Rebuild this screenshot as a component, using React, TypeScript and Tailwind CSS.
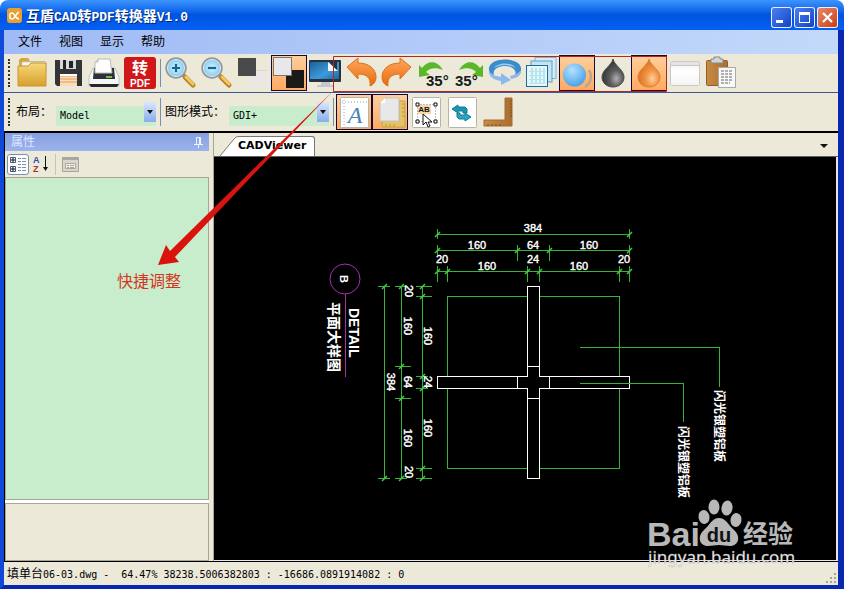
import React from "react";

type IconButton = { label: string; active?: boolean; icon: React.ReactNode };

const SANS = "font-['Liberation_Sans','Noto_Sans_CJK_SC',sans-serif]";
const MONO = "font-['DejaVu_Sans_Mono','Noto_Sans_CJK_SC',monospace]";
const NARROW = "Liberation Sans Narrow, Liberation Sans, sans-serif";

function Defs() {
  return (
    <svg className="absolute size-0" aria-hidden="true">
      <defs>
        <linearGradient id="gold" x1="0" y1="0" x2="0" y2="1">
          <stop offset="0" stopColor="#f8d878" />
          <stop offset="1" stopColor="#d6a02c" />
        </linearGradient>
        <linearGradient id="orange" x1="0" y1="0" x2="0" y2="1">
          <stop offset="0" stopColor="#ffa860" />
          <stop offset="1" stopColor="#e86a08" />
        </linearGradient>
        <linearGradient id="screen" x1="0" y1="0" x2="1" y2="1">
          <stop offset="0" stopColor="#1c5f9e" />
          <stop offset="0.6" stopColor="#3d9bd8" />
          <stop offset="1" stopColor="#1b66a5" />
        </linearGradient>
        <linearGradient id="paper" x1="0" y1="0" x2="0" y2="1">
          <stop offset="0" stopColor="#f0f0f0" />
          <stop offset="0.4" stopColor="#ffffff" />
          <stop offset="1" stopColor="#f4f4f4" />
        </linearGradient>
        <linearGradient id="wood" x1="0" y1="0" x2="1" y2="0">
          <stop offset="0" stopColor="#c98b45" />
          <stop offset="1" stopColor="#a86f30" />
        </linearGradient>
        <radialGradient id="ball" cx="0.4" cy="0.3" r="0.7">
          <stop offset="0" stopColor="#b4e2ff" />
          <stop offset="1" stopColor="#4aa4ea" />
        </radialGradient>
        <radialGradient id="lens" cx="0.5" cy="0.5" r="0.5">
          <stop offset="0" stopColor="#d8f4ff" />
          <stop offset="1" stopColor="#7cc8f0" />
        </radialGradient>
        <radialGradient id="dropDark" cx="0.65" cy="0.7" r="0.6">
          <stop offset="0" stopColor="#b0b0b0" />
          <stop offset="0.5" stopColor="#5c5c5c" />
          <stop offset="1" stopColor="#3a3a3a" />
        </radialGradient>
        <radialGradient id="dropOrange" cx="0.65" cy="0.7" r="0.6">
          <stop offset="0" stopColor="#ffd09c" />
          <stop offset="0.5" stopColor="#f09444" />
          <stop offset="1" stopColor="#dc7828" />
        </radialGradient>
      </defs>
    </svg>
  );
}

function Icon({ children }: { children: React.ReactNode }) {
  return (
    <svg viewBox="0 0 36 36" className="size-9" aria-hidden="true">
      {children}
    </svg>
  );
}

function Magnifier({ plus }: { plus?: boolean }) {
  return (
    <Icon>
      <path d="M19 19l3 3" stroke="#888" strokeWidth="3" />
      <path d="M22 22l8 8" stroke="#b98220" strokeWidth="5" strokeLinecap="round" />
      <path d="M23 22l7 7" stroke="#f4c860" strokeWidth="3" strokeLinecap="round" />
      <circle cx="13" cy="13" r="9.500" fill="url(#lens)" stroke="#8e9aa4" strokeWidth="2.500" />
      <circle cx="13" cy="13" r="8.500" fill="none" stroke="#e8eef2" strokeWidth="1" />
      <path d={plus ? "M9 13h8M13 9v8" : "M9 13h8"} stroke="#17648f" strokeWidth="2.200" />
    </Icon>
  );
}

const undoPath = "M4 12L15 3v5c11 0 18 6 18 14 0 5-3 8-6 9 1-8-3-12-12-12v5z";

function Drop({ fill, edge }: { fill: string; edge: string }) {
  return (
    <Icon>
      <path d="M18 4c1 6 11 11 11 18 0 6-5 10-11 10S7 28 7 22C7 15 17 10 18 4z" fill={fill} stroke={edge} />
    </Icon>
  );
}

function Sheet({ children }: { children: React.ReactNode }) {
  return (
    <Icon>
      <rect x="4.500" y="3.500" width="28" height="30" rx="1" fill="#fff" stroke="#b8b4a8" />
      {children}
    </Icon>
  );
}

const fileTools: IconButton[] = [
  {
    label: "打开",
    icon: (
      <Icon>
        <path d="M5 5l2-2h7l2 3h15v12H5z" fill="#d9a63a" />
        <path d="M8 7h24v10H8z" fill="#fafafa" stroke="#ccc" />
        <path d="M4 11h10l3-3h15v23H4z" fill="url(#gold)" stroke="#c99430" />
      </Icon>
    ),
  },
  {
    label: "保存",
    icon: (
      <Icon>
        <path d="M5 5h27v26H7l-2-2z" fill="#333436" />
        <path d="M10 5h16v9H10z" fill="#d8d8dc" />
        <path d="M13 5h3v9h-3zM19 6h4v7h-4z" fill="#222" />
        <path d="M10 19h17v12H10z" fill="#fbdcb8" />
        <path d="M10 21h17M10 24h17M10 27h17" stroke="#e49a5c" />
        <path d="M10 19h17v2H10z" fill="#fff" />
      </Icon>
    ),
  },
  {
    label: "打印",
    icon: (
      <Icon>
        <path d="M7 13h22l4 9v9H3v-9z" fill="#f4f6f8" stroke="#c0c2c4" />
        <path d="M8 13h20l1 11H7z" fill="#2e3234" />
        <path d="M9 18V7l3-3h12l2 14z" fill="#fdfdfd" stroke="#bbb" />
        <path d="M9 7h3V4" fill="#ddd" stroke="#bbb" />
        <path d="M3 29h30l-2 3H5z" fill="#26282a" />
        <path d="M20 22h6" stroke="#78b844" strokeWidth="2" />
      </Icon>
    ),
  },
  {
    label: "转PDF",
    icon: (
      <Icon>
        <rect x="2" y="2" width="32" height="32" rx="3" fill="#d01818" />
        <text x="18" y="19" textAnchor="middle" fontSize="16" fontWeight="700" fill="#fff">转</text>
        <text x="18" y="32" textAnchor="middle" fontSize="10" fontWeight="700" fill="#fff">PDF</text>
      </Icon>
    ),
  },
];

const viewTools: IconButton[] = [
  { label: "放大", icon: <Magnifier plus /> },
  { label: "缩小", icon: <Magnifier /> },
  {
    label: "黑色背景",
    icon: (
      <Icon>
        <rect x="15" y="16" width="18" height="16" fill="#e9e8e2" />
        <path d="M21 15.500h11" stroke="#d8d8d4" />
        <rect x="3" y="3" width="18" height="18" fill="#4a4a4a" />
      </Icon>
    ),
  },
  {
    label: "黑白",
    active: true,
    icon: (
      <Icon>
        <rect x="15" y="15" width="18" height="18" fill="#1c1a18" />
        <rect x="2.500" y="2.500" width="18" height="18" fill="#e8e8ea" stroke="#777" />
      </Icon>
    ),
  },
  {
    label: "全屏",
    icon: (
      <Icon>
        <path d="M14 26h9v4h4v2H10v-2h4z" fill="#c4c8cc" />
        <rect x="2" y="5" width="32" height="22" rx="1" fill="#27323e" />
        <rect x="3" y="7" width="29" height="17" fill="url(#screen)" />
        <path d="M21 5l9 12V5z" fill="#27323e" />
        <path d="M21 7l10 9H21z" fill="#f4f6f8" />
      </Icon>
    ),
  },
  { label: "撤销", icon: <Icon><path d={undoPath} fill="url(#orange)" stroke="#d8741c" /></Icon> },
  {
    label: "重做",
    icon: <Icon><path d={undoPath} transform="translate(36 0) scale(-1 1)" fill="url(#orange)" stroke="#d8741c" /></Icon>,
  },
  {
    label: "左转35度",
    icon: (
      <Icon>
        <path d="M4 10v12l11-2-4-3c3-4 10-5 17-2C22 5 13 5 7 13z" fill="#58b828" />
        <text x="11" y="31" fontSize="15" fontWeight="700" fontFamily={NARROW} fill="#15191c">35°</text>
      </Icon>
    ),
  },
  {
    label: "右转35度",
    icon: (
      <Icon>
        <path d="M32 10v12l-11-2 4-3c-3-4-10-5-17-2C14 5 23 5 29 13z" fill="#58b828" />
        <text x="4" y="31" fontSize="15" fontWeight="700" fontFamily={NARROW} fill="#15191c">35°</text>
      </Icon>
    ),
  },
  {
    label: "旋转",
    icon: (
      <Icon>
        <path d="M2 15C0 1 36 1 34 15c0 4-3 6-7 7 5-7-3-11-9-11S5 14 7 20c-3-1-5-2-5-5z" fill="#3c8ccc" />
        <path d="M7 13c4-6 18-6 22 0-6-4-16-4-22 0z" fill="#9cd0f4" />
        <path d="M2 15c1 4 6 6 12 7v-4l10 7-10 5v-4C6 25 1 21 2 15z" fill="#8cb8ee" />
        <path d="M34 15c0 6-4 8-10 9l-1-3c5-1 9-3 11-6z" fill="#8cb8ee" />
      </Icon>
    ),
  },
  {
    label: "图层",
    icon: (
      <Icon>
        <rect x="12" y="2.500" width="21" height="21" fill="#d4ecf6" stroke="#80b4d0" />
        <rect x="8" y="6" width="21" height="21" fill="#c4e4f2" stroke="#60a0c4" />
        <rect x="3.500" y="10.500" width="21" height="21" fill="#e8f6fa" stroke="#1c6c9c" />
        <rect x="6" y="13" width="16" height="16" fill="#b8e4f0" />
        <path d="M7 13v16M11 13v16M15 13v16M19 13v16M6 15h16M6 19h16M6 23h16M6 27h16" stroke="#e4f6fa" strokeWidth="2" strokeDasharray="2 2" />
      </Icon>
    ),
  },
  {
    label: "弧线",
    active: true,
    icon: (
      <Icon>
        <path d="M30 15c4 7 1 14-4 17" fill="none" stroke="#b8a890" strokeWidth="2.500" />
        <circle cx="15.500" cy="20" r="11.500" fill="url(#ball)" />
      </Icon>
    ),
  },
  { label: "灰度", icon: <Drop fill="url(#dropDark)" edge="#4a4a4a" /> },
  { label: "彩色", active: true, icon: <Drop fill="url(#dropOrange)" edge="#e08030" /> },
  {
    label: "窗口",
    icon: (
      <Icon>
        <rect x="3.500" y="6.500" width="29" height="24" rx="1" fill="url(#paper)" stroke="#ccc8c0" />
        <path d="M4 7h28v3H4z" fill="#e4e4e4" />
        <path d="M4 10.500h28" stroke="#c8c8c8" />
      </Icon>
    ),
  },
  {
    label: "粘贴",
    icon: (
      <Icon>
        <rect x="3.500" y="5.500" width="21" height="25" rx="1" fill="url(#wood)" stroke="#8e6028" />
        <path d="M8 8V4h3V2h6v2h3v4z" fill="#d4d4d4" stroke="#888" />
        <rect x="15.500" y="12.500" width="17" height="20" fill="#f8f8f8" stroke="#aaa" />
        <path d="M18 16h12M18 19h12M18 22h12M18 25h12M18 28h9" stroke="#666" strokeDasharray="3 1" />
      </Icon>
    ),
  },
];

const modeTools: IconButton[] = [
  {
    label: "文字",
    active: true,
    icon: (
      <Sheet>
        <path d="M6 8h25M8 6v25" stroke="#98a4b4" strokeDasharray="1 2" />
        <text x="19" y="29" textAnchor="middle" fontSize="24" fontStyle="italic" fontFamily="Liberation Serif, serif" fill="#4c84b4">A</text>
      </Sheet>
    ),
  },
  {
    label: "图纸尺寸",
    active: true,
    icon: (
      <Icon>
        <path d="M27 7h6v26H10v-7h17z" fill="#e2c468" stroke="#c8a040" />
        <path d="M30 10h3M30 14h3M30 18h3M30 22h3M14 30v3M18 30v3M22 30v3" stroke="#c09838" />
        <path d="M8 9l5-5h14v23H8z" fill="#e8e8e8" stroke="#c8c4bc" />
        <path d="M8 9h5V4z" fill="#ffffff" />
      </Icon>
    ),
  },
  {
    label: "选择文字",
    icon: (
      <Sheet>
        <rect x="9.500" y="10.500" width="18" height="17" fill="none" stroke="#777" strokeDasharray="1 2" />
        <rect x="10" y="11" width="13" height="9" fill="#fbd8a8" />
        <path d="M8 9h3v3H8zM26 9h3v3h-3zM8 26h3v3H8zM26 26h3v3h-3z" fill="#fff" stroke="#111" />
        <text x="16" y="18" textAnchor="middle" fontSize="8" fontWeight="700" fill="#111">AB</text>
        <path d="M15 20v11l3-3 2 5 2-1-2-4h4z" fill="#fff" stroke="#111" />
      </Sheet>
    ),
  },
  {
    label: "切换",
    icon: (
      <Sheet>
        <path d="M8 15l6-4v2h7l2 2v4h-4v-2h-5v2z" fill="#1898b4" stroke="#107890" />
        <path d="M27 23l-6 4v-2h-6l-2-2v-4h3v2h5v-2z" fill="#28a8c0" stroke="#107890" />
      </Sheet>
    ),
  },
  {
    label: "测量",
    icon: (
      <Icon>
        <path d="M25 4h7v28H4v-6h21z" fill="url(#wood)" stroke="#a46c2c" />
        <path d="M30 7h2M30 10h2M30 13h2M30 16h2M30 19h2M30 22h2M8 30v2M12 30v2M16 30v2M20 30v2" stroke="#7c5018" />
      </Icon>
    ),
  },
];

function Tools({ items }: { items: IconButton[] }) {
  return (
    <>
      {items.map((t) => (
        <button
          key={t.label}
          type="button"
          title={t.label}
          aria-label={t.label}
          className={
            t.active
              ? "size-9 shrink-0 bg-linear-to-b from-[#fdd09c] to-[#ffa860] outline outline-1 -outline-offset-1 outline-[#180838]"
              : "size-9 shrink-0"
          }
        >
          {t.icon}
        </button>
      ))}
    </>
  );
}

function Grip() {
  return <div className="mx-1 h-7 w-0 shrink-0 border-l-2 border-dotted border-[#303030]" />;
}

function Separator() {
  return <div className="mx-0.5 h-7 w-px shrink-0 bg-[#7090b8]" />;
}

function Combo({ id, label, value }: { id: string; label: string; value: string }) {
  return (
    <div className="flex shrink-0 items-center px-0.5">
      <label htmlFor={id} className="mr-1 text-xs">{label}</label>
      <div className="relative h-5 w-[100px]">
        <select id={id} defaultValue={value} className={`h-5 w-full appearance-none bg-[#c7edcc] pl-1 text-[10px] outline-none ${MONO}`}>
          <option>{value}</option>
        </select>
        <div className="pointer-events-none absolute inset-y-0 right-0 flex w-3 items-center justify-center bg-linear-to-b from-[#dce8fc] to-[#88acec]">
          <svg viewBox="0 0 6 4" className="h-1 w-1.5"><path d="M0 0h6L3 4z" fill="#111" /></svg>
        </div>
      </div>
    </div>
  );
}

function TitleBar() {
  const frame = "flex size-[21px] items-center justify-center rounded-[3px] border border-white/90";
  return (
    <header className="flex h-[30px] shrink-0 items-center rounded-t-lg bg-linear-to-b from-[#3c94ff] via-[#0054e0] to-[#0460f4] pl-[7px] pr-1.5">
      <svg viewBox="0 0 15 15" className="mr-1 size-[15px]" aria-hidden="true">
        <rect width="15" height="15" rx="3" fill="#e8a030" />
        <path d="M12 4C9 5 8 11 5 11c-3 0-3-6 0-6 3 0 3 6 7 6" fill="none" stroke="#fff" strokeWidth="1.500" />
      </svg>
      <h1 className="flex-1 whitespace-nowrap pt-1 font-['Liberation_Mono','Noto_Sans_CJK_SC',monospace] text-sm font-bold text-white [text-shadow:1px_1px_#002878]">
        互盾<span className="text-[13px]">CAD</span>转<span className="text-[13px]">PDF</span>转换器<span className="text-[13px]">V1.0</span>
      </h1>
      <div className="mt-1 flex gap-0.5">
        <button type="button" aria-label="最小化" className={`${frame} bg-linear-to-br from-[#4c80f0] to-[#1440c8]`}>
          <svg viewBox="0 0 19 19" className="size-[19px]"><path d="M4 12h7v3H4z" fill="#fff" /></svg>
        </button>
        <button type="button" aria-label="最大化" className={`${frame} bg-linear-to-br from-[#4c80f0] to-[#1440c8]`}>
          <svg viewBox="0 0 19 19" className="size-[19px]"><path d="M4 4h11v11H4zM5 7v7h9V7z" fillRule="evenodd" fill="#fff" /></svg>
        </button>
        <button type="button" aria-label="关闭" className={`${frame} bg-linear-to-br from-[#e88868] to-[#c83c14]`}>
          <svg viewBox="0 0 19 19" className="size-[19px]"><path d="M5 5l9 9M14 5l-9 9" stroke="#fff" strokeWidth="2.200" /></svg>
        </button>
      </div>
    </header>
  );
}

function PropertyPanel() {
  return (
    <aside aria-label="属性" className="mr-1 flex w-[204px] shrink-0 flex-col">
      <div className="flex h-[18px] shrink-0 items-center justify-between bg-linear-to-b from-[#86a0e0] to-[#9cb4ec] px-1.5 text-xs text-[#dce8ff]">
        <h2>属性</h2>
        <button type="button" aria-label="固定">
          <svg viewBox="0 0 9 11" className="h-[11px] w-[9px]"><path d="M2.500 7V.5h4V7M5.500 1v6M0 7.500h9M4.500 8v3" fill="none" stroke="#eef4ff" /></svg>
        </button>
      </div>
      <div className="flex h-[26px] shrink-0 items-center pl-0.5">
        <button type="button" aria-label="分类" className="flex h-[21px] w-[22px] items-center justify-center rounded-[3px] border border-[#7890b0] bg-[#fcfcfa]">
          <svg viewBox="0 0 18 17" className="h-[17px] w-[18px]">
            <path d="M1.500 1.500h5v5h-5zM1.500 10.500h5v5h-5z" fill="#fff" stroke="#405880" />
            <path d="M2 4h4M4 2v4M2 13h4M4 11v4" stroke="#111" />
            <path d="M9 2.500h3M13 2.500h4M9 5.500h3M13 5.500h4M9 8.500h3M13 8.500h4M9 11.500h3M13 11.500h4M9 14.500h3M13 14.500h4" stroke="#7890b0" />
          </svg>
        </button>
        <button type="button" aria-label="按字母排序" className="ml-1 flex items-center">
          <svg viewBox="0 0 16 20" className="h-5 w-4">
            <text x="0" y="9" fontSize="9" fontWeight="700" fill="#2c4cb0">A</text>
            <text x="0" y="18" fontSize="9" fontWeight="700" fill="#a83030">Z</text>
            <path d="M12.500 2v13" stroke="#111" />
            <path d="M10 13h5l-2.500 4z" fill="#111" />
          </svg>
        </button>
        <div className="mx-1.5 h-[21px] w-px bg-[#c8c4b4]" />
        <button type="button" aria-label="属性页" className="flex items-center">
          <svg viewBox="0 0 17 15" className="h-[15px] w-[17px]">
            <path d="M.5.500h16v14H.5z" fill="#d8d6cc" stroke="#a8a69c" />
            <path d="M1 2h15" stroke="#aaa89c" strokeWidth="2" />
            <path d="M3.500 6.500h10v5h-10z" fill="#f0eee4" stroke="#aaa89c" />
            <path d="M5 8.500h2M8 8.500h4M5 10.500h2M8 10.500h4" stroke="#aaa89c" />
          </svg>
        </button>
      </div>
      <div className="flex-1 border border-[#a8a698] bg-[#c7edcc]" />
      <div className="h-[3px] shrink-0 bg-white" />
      <div className="h-[58px] shrink-0 border border-[#a8a698]" />
    </aside>
  );
}

const hTicks: [number, number, number][] = [
  [437, 234, 0], [629, 234, 0],
  [437, 250, 0], [517, 250, 12], [549, 250, 12], [629, 250, 0],
  [437, 271, 12], [447, 271, 12], [527, 271, 12], [539, 271, 12], [619, 271, 12], [629, 271, 12],
];
const vTicks: [number, number, number][] = [
  [384, 286, 0], [384, 478, 0],
  [401, 286, 0], [401, 366, 8], [401, 398, 8], [401, 478, 0],
  [422, 286, 8], [422, 296, 8], [422, 376, 0], [422, 388, 0], [422, 468, 8], [422, 478, 8],
];
const hLabels: [number, number, string][] = [
  [533, 232, "384"], [477, 249, "160"], [533, 249, "64"], [589, 249, "160"],
  [442, 263, "20"], [533, 263, "24"], [624, 263, "20"], [487, 270, "160"], [579, 270, "160"],
];
const vLabels: [number, number, string][] = [
  [387, 382, "384"], [405, 291, "20"], [404, 326, "160"], [404, 382, "64"], [404, 438, "160"], [405, 472, "20"],
  [424, 336, "160"], [424, 382, "24"], [424, 428, "160"],
];

function Drawing() {
  return (
    <svg viewBox="214 157 623 403" className="h-[403px] w-[623px] max-w-none" role="img" aria-label="平面大样图">
      <g fill="none" stroke="#35b535" shapeRendering="crispEdges">
        <path d="M447.500 296.500H619.500V468.500H447.500z" />
        <path d="M437 234.500H629M437 250.500H629M437 271.500H629" />
        <path d="M384.500 286V478M401.500 286V478M422.500 286V478" />
        {hTicks.map(([x, y, n]) => (
          <path key={`${x}-${y}`} d={`M${x + 0.5} ${y - 5}v${10 + n / 2}`} />
        ))}
        {vTicks.map(([x, y, n]) => (
          <path key={`${x}-${y}`} d={`M${x - 6} ${y + 0.5}h${12 + n / 2}`} />
        ))}
      </g>
      <g fill="none" stroke="#40d040" strokeWidth="1.500">
        {[...hTicks, ...vTicks].map(([x, y]) => (
          <path key={`${x}-${y}`} d={`M${x - 2} ${y + 3}l5-5`} />
        ))}
      </g>
      <g stroke="#fff" fill="#000" shapeRendering="crispEdges">
        <path d="M527.500 286.500h12v90h90v12h-90v90h-12v-90h-90v-12h90z" />
        <path d="M527 366.500h12M527 398.500h12M517.500 376v12M549.500 376v12" />
      </g>
      <path d="M580 347.500H719.500V387M580 383.500H683.500V422" fill="none" stroke="#35b535" shapeRendering="crispEdges" />
      <g fill="none" stroke="#a832a8">
        <circle cx="345" cy="279" r="15" />
        <path d="M345.500 294V377" />
      </g>
      <g fill="#fff" stroke="#fff" strokeWidth="0.400" fontSize="11" textAnchor="middle">
        {hLabels.map(([x, y, s]) => (
          <text key={`${x}-${y}`} x={x} y={y}>{s}</text>
        ))}
        {vLabels.map(([x, y, s]) => (
          <text key={`${x}-${y}`} transform={`translate(${x} ${y}) rotate(90)`}>{s}</text>
        ))}
      </g>
      <g fill="#fff" fontWeight="700">
        <text transform="translate(340 275) rotate(90)" fontSize="11">B</text>
        <text transform="translate(349 308) rotate(90)" fontSize="14">DETAIL</text>
        <text transform="translate(329 302) rotate(90)" fontSize="14">平面大样图</text>
        <text transform="translate(715 390) rotate(90)" fontSize="12">闪光银塑铝板</text>
        <text transform="translate(679 426) rotate(90)" fontSize="12">闪光银塑铝板</text>
      </g>
    </svg>
  );
}

function Watermark() {
  return (
    <svg viewBox="0 0 160 76" className="pointer-events-none absolute -bottom-3.5 right-[30px] h-[76px] w-40" aria-hidden="true">
      <g fill="#b8b8b8">
        <text x="-1" y="47" fontSize="34" fontWeight="700">Bai</text>
        <ellipse cx="56" cy="18" rx="5.500" ry="7" transform="rotate(-12 56 18)" />
        <ellipse cx="66" cy="8" rx="5.500" ry="7.500" />
        <ellipse cx="79" cy="9" rx="5.500" ry="7.500" transform="rotate(10 79 9)" />
        <ellipse cx="88" cy="21" rx="5.500" ry="7" transform="rotate(12 88 21)" />
        <path d="M71 19c7 0 10 8 15 12 7 6 5 16-4 16-4 0-7-1-11-1s-7 1-11 1c-9 0-11-10-4-16 5-4 8-12 15-12z" />
        <text x="95" y="44" fontSize="25" fontWeight="700">经验</text>
      </g>
      <text x="71" y="43" textAnchor="middle" fontSize="20" fontWeight="700" fill="#111">du</text>
      <text x="0" y="64" fontSize="17" fontFamily="Noto Sans, sans-serif" fill="#f4f4f4" stroke="#999" strokeWidth="0.300">jingyan.baidu.com</text>
    </svg>
  );
}

function Viewer() {
  return (
    <section className="relative flex min-w-0 flex-1 flex-col border-l border-[#a8a698]">
      <div className="flex h-6 shrink-0 items-end border-b border-[#606060] pl-1.5 pr-2.5">
        <svg viewBox="0 0 18 20" className="h-5 w-[18px]" aria-hidden="true">
          <path d="M0 20L14 3Q16 0 18 0v20z" fill="#fff" />
          <path d="M0 20L14 3Q16 .5 18 .5" fill="none" stroke="#777" />
        </svg>
        <button type="button" className="h-5 rounded-tr-[3px] border-r border-t border-[#777] bg-white pr-2 font-['DejaVu_Sans',sans-serif] text-[11px] font-bold">
          CADViewer
        </button>
        <button type="button" aria-label="标签列表" className="mb-2 ml-auto">
          <svg viewBox="0 0 8 4" className="h-1 w-2"><path d="M0 0h8L4 4z" fill="#111" /></svg>
        </button>
      </div>
      <div className="min-h-0 flex-1 overflow-hidden border-b border-r-2 border-[#e8e6ec] bg-black">
        <Drawing />
      </div>
      <Watermark />
    </section>
  );
}

function Annotation() {
  return (
    <div className="pointer-events-none absolute left-0 top-0">
      <svg viewBox="0 0 700 300" className="h-[300px] w-[700px] max-w-none">
        <path d="M333.500 56.500H666.500V91.500H333.500z" fill="none" stroke="#b02820" />
        <path d="M332 92L175 257l4 5-21 3 8-20 4 6z" fill="#d8140c" />
        <text x="117" y="287" fontSize="16" fill="#d8341c">快捷调整</text>
      </svg>
    </div>
  );
}

export default function App() {
  return (
    <div className={`relative flex h-screen flex-col overflow-hidden bg-white text-black ${SANS}`}>
      <Defs />
      <TitleBar />
      <div className="flex min-h-0 flex-1 flex-col border-b-4 border-l-4 border-r-[6px] border-b-[#0828b0] border-l-[#1048d8] border-r-[#0828b0] bg-[#ece9d8]">
        <nav aria-label="主菜单" className="flex h-6 shrink-0 items-center gap-[17px] bg-linear-to-r from-[#9fbaf5] to-[#c3d9fa] pl-3.5 text-xs">
          {["文件", "视图", "显示", "帮助"].map((m) => (
            <button key={m} type="button">{m}</button>
          ))}
        </nav>
        <div role="toolbar" aria-label="工具" className="flex h-[39px] shrink-0 items-center border-b border-[#40568c]">
          <Grip />
          <Tools items={fileTools} />
          <Separator />
          <Tools items={viewTools} />
        </div>
        <div role="toolbar" aria-label="布局" className="flex h-10 shrink-0 items-center border-b-2 border-black">
          <Grip />
          <Combo id="layout" label="布局：" value="Model" />
          <Separator />
          <Combo id="mode" label="图形模式：" value="GDI+" />
          <Separator />
          <Tools items={modeTools} />
        </div>
        <main className="flex min-h-0 flex-1 border-b border-l border-black">
          <PropertyPanel />
          <Viewer />
        </main>
        <footer className="flex h-[23px] shrink-0 items-center justify-between whitespace-pre pl-[3px]">
          <p className={`text-[10px] ${MONO}`}>
            <span className="text-xs">填单台</span>06-03.dwg -  64.47% 38238.5006382803 : -16686.0891914082 : 0
          </p>
          <svg viewBox="0 0 12 12" className="size-3 self-end" aria-hidden="true">
            <path d="M8 0h2v2H8zM4 4h2v2H4zM8 4h2v2H8zM0 8h2v2H0zM4 8h2v2H4zM8 8h2v2H8z" fill="#a8a490" />
          </svg>
        </footer>
      </div>
      <Annotation />
    </div>
  );
}
